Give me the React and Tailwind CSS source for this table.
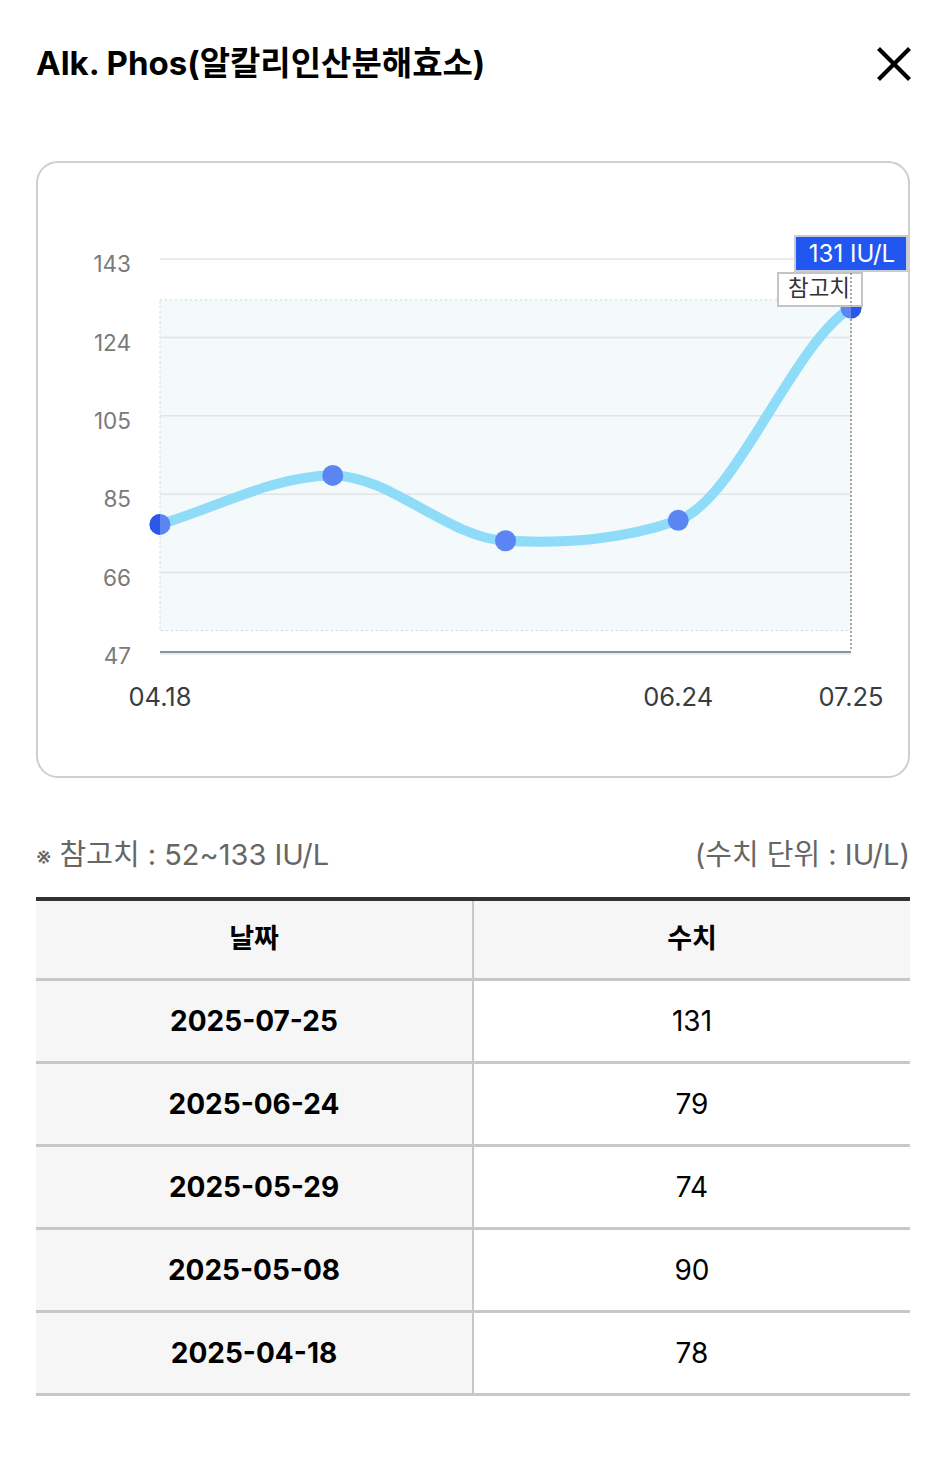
const font = { fontFamily: 'Inter, "Noto Sans CJK KR", sans-serif' };

const points = [
  { label: "04.18", value: 78, show: true },
  { label: "05.08", value: 90, show: false },
  { label: "05.29", value: 74, show: false },
  { label: "06.24", value: 79, show: true },
  { label: "07.25", value: 131, show: true },
];

const rows = [
  ["2025-07-25", "131"],
  ["2025-06-24", "79"],
  ["2025-05-29", "74"],
  ["2025-05-08", "90"],
  ["2025-04-18", "78"],
];

const yTicks = [143, 124, 105, 85, 66, 47];

// plot area in page coords
const X0 = 160;
const X1 = 851;
const Y_BOTTOM = 651;
const Y_TOP = 259;
const yOf = (v) => Y_BOTTOM - ((v - 47) * (Y_BOTTOM - Y_TOP)) / 96;
const xOf = (i) => X0 + (i * (X1 - X0)) / (points.length - 1);

function curvePath() {
  const pts = points.map((p, i) => [xOf(i), yOf(p.value)]);
  const tangents = [-0.3, 0, 0.05, -0.35, -0.6];
  let d = `M${pts[0][0]},${pts[0][1]}`;
  for (let i = 0; i < pts.length - 1; i++) {
    const [xa, ya] = pts[i];
    const [xb, yb] = pts[i + 1];
    const dx = (xb - xa) / 3;
    d += ` C${xa + dx},${ya + dx * tangents[i]} ${xb - dx},${yb - dx * tangents[i + 1]} ${xb},${yb}`;
  }
  return d;
}

function Chart() {
  const gridYs = yTicks.map((_, i) => Y_TOP + (i * (Y_BOTTOM - Y_TOP)) / 5);
  const last = points.length - 1;
  return (
    <svg width="870" height="613" viewBox="38 163 870 613" className="block">
      {/* reference band */}
      <rect x={X0} y={yOf(133)} width={X1 - X0} height={yOf(52) - yOf(133)} fill="#f4f9fb" stroke="#cfd3d6" strokeWidth="1" strokeDasharray="2 3" />
      {gridYs.slice(0, 5).map((y) => (
        <line key={y} x1={X0} x2={X1} y1={y} y2={y} stroke="#e2e4e6" strokeWidth="1.5" />
      ))}
      <line x1={X0} x2={X1} y1={Y_BOTTOM + 1} y2={Y_BOTTOM + 1} stroke="#8a93a0" strokeWidth="2" />
      <line x1={X0} x2={X1} y1={Y_BOTTOM + 3} y2={Y_BOTTOM + 3} stroke="#e4e6ea" strokeWidth="1.5" />
      {yTicks.map((t, i) => (
        <text key={t} x="131" y={gridYs[i] + 7} textAnchor="end" dominantBaseline="middle" fontSize="22.5" fill="#7a7a7a" style={font}>
          {t}
        </text>
      ))}
      {points.map((p, i) =>
        p.show ? (
          <text key={p.label} x={xOf(i)} y="699" textAnchor="middle" dominantBaseline="middle" fontSize="25.5" fill="#373d3f" style={font}>
            {p.label}
          </text>
        ) : null
      )}
      {/* crosshair */}
      <line x1={X1} x2={X1} y1="271" y2={Y_BOTTOM} stroke="#8c8c8c" strokeWidth="1.5" strokeDasharray="2 2" />
      <path d={curvePath()} fill="none" stroke="#8edcf8" strokeWidth="10" strokeLinecap="round" />
      {points.map((p, i) => (
        <circle key={p.label} cx={xOf(i)} cy={yOf(p.value)} r="10.5" fill="#5b85f3" />
      ))}
      <path d={`M${X0},${yOf(78) - 10.5} A10.5,10.5 0 0 0 ${X0},${yOf(78) + 10.5} Z`} fill="#2a56ea" />
      <path d={`M${X1},${yOf(131) - 10.5} A10.5,10.5 0 0 1 ${X1},${yOf(131) + 10.5} Z`} fill="#2a56ea" />
      {/* reference label */}
      <rect x="778" y="273" width="84" height="33" fill="#ffffff" stroke="#c4c4c4" strokeWidth="2" />
      <text x="819" y="290" textAnchor="middle" dominantBaseline="middle" fontSize="22.5" fill="#333" style={font}>
        참고치
      </text>
      <line x1={X1} x2={X1} y1="273" y2="306" stroke="#8c8c8c" strokeWidth="1.5" strokeDasharray="2 2" />
      {/* tooltip */}
      <rect x="795" y="236" width="112" height="35" fill="#2156f0" stroke="#c8ccd6" strokeWidth="2" />
      <text x="852" y="255" textAnchor="middle" dominantBaseline="middle" fontSize="24" fill="#ffffff" style={font}>
        {points[last].value} IU/L
      </text>
    </svg>
  );
}

export default function App() {
  return (
    <div className="w-[946px] min-h-[1482px] bg-white px-[36px]" style={font}>
      {/* Header */}
      <div className="h-[128px] flex items-center justify-between">
        <h1 className="text-[33px] font-bold text-black tracking-[0px]">Alk. Phos(알칼리인산분해효소)</h1>
        <button className="w-[34px] h-[34px] -mr-[1px]">
          <svg viewBox="0 0 34 34" width="34" height="34">
            <path d="M3 3 L31 31 M31 3 L3 31" stroke="#000" strokeWidth="4.2" strokeLinecap="square" />
          </svg>
        </button>
      </div>

      {/* Chart */}
      <div className="mt-[33px] w-[874px] h-[617px] border-2 border-[#cfcfcf] rounded-[22px]">
        <Chart />
      </div>

      {/* Reference info */}
      <div className="mt-[52px] h-[50px] flex items-center justify-between text-[29px] text-[#666] tracking-[0px]">
        <p>
          <span className="text-[24px] align-middle">※</span> 참고치 : 52~133 IU/L
        </p>
        <p>(수치 단위 : IU/L)</p>
      </div>

      {/* Table */}
      <table className="mt-[17px] w-[874px] border-collapse border-t-[4px] border-t-[#333]">
        <thead>
          <tr className="h-[80px] bg-[#f6f6f6] border-b-[3px] border-[#c8c8c8]">
            <th className="w-[437px] border-r-2 border-[#c8c8c8] text-[27px] font-bold text-black">날짜</th>
            <th className="text-[27px] font-bold text-black">수치</th>
          </tr>
        </thead>
        <tbody>
          {rows.map(([date, val]) => (
            <tr key={date} className="h-[83px] border-b-[3px] border-[#c8c8c8]">
              <td className="bg-[#f6f6f6] border-r-2 border-[#c8c8c8] text-center text-[28px] font-bold text-black">{date}</td>
              <td className="bg-white text-center text-[28px] text-black">{val}</td>
            </tr>
          ))}
        </tbody>
      </table>
    </div>
  );
}
